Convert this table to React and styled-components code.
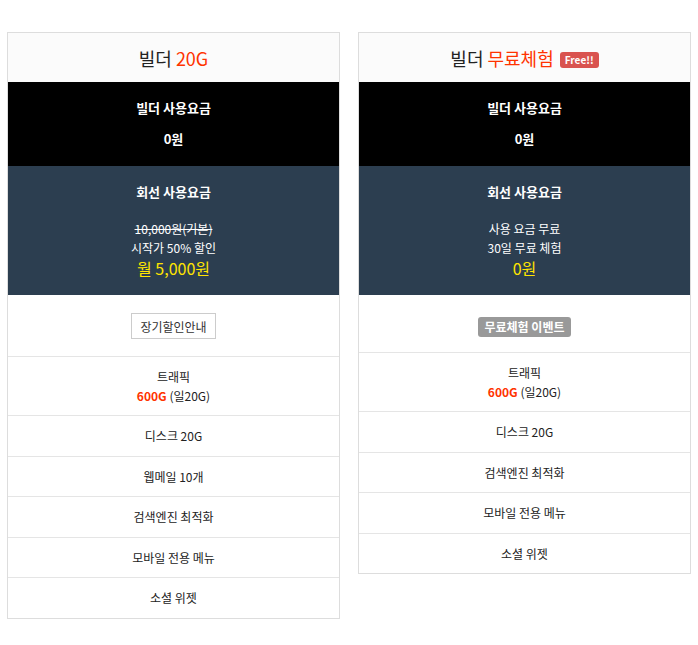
import React from 'react';
import styled, { createGlobalStyle } from 'styled-components';

const GlobalStyle = createGlobalStyle`
  body {
    margin: 0;
    background: #fff;
    font-family: "Noto Sans CJK KR", "Noto Sans", sans-serif;
    color: #222;
  }
`;

const Page = styled.div`
  display: grid;
  grid-template-columns: 1fr 1fr;
  gap: 18px;
  align-items: start;
  padding: 32px 7px 20px;
`;

const Card = styled.div`
  border: 1px solid #ddd;
  text-align: center;
`;

const Header = styled.div`
  height: 49px;
  display: flex;
  align-items: center;
  justify-content: center;
  gap: 6px;
  background: #fbfbfb;
  font-size: 18px;
  color: #222;
`;

const Red = styled.span`
  color: #ff3300;
  font-weight: ${({ bold }) => (bold ? 700 : 400)};
`;

const FreeBadge = styled.span`
  display: inline-block;
  margin-top: 4px;
  padding: 0 5px;
  height: 16px;
  line-height: 16px;
  border-radius: 3px;
  background: #d9534f;
  color: #fff;
  font-size: 10px;
  font-weight: 700;
`;

const PriceBlock = styled.div`
  background: ${({ bg }) => bg};
  color: #fff;
  padding: 16px 0 ${({ bottom }) => bottom}px;
`;

const BlockTitle = styled.div`
  font-size: 13px;
  font-weight: 700;
  line-height: 20px;
  margin-bottom: ${({ gap }) => gap}px;
`;

const BlockPrice = styled.div`
  font-size: ${({ big }) => (big ? 16 : 13)}px;
  font-weight: ${({ big }) => (big ? 400 : 700)};
  line-height: ${({ big }) => (big ? 22 : 20)}px;
  color: ${({ big }) => (big ? '#ffe400' : '#fff')};
`;

const SmallLine = styled.div`
  font-size: 12px;
  line-height: 19px;
  text-decoration: ${({ strike }) => (strike ? 'line-through' : 'none')};
`;

const ActionRow = styled.div`
  padding: ${({ top }) => top}px 0 ${({ bottom }) => bottom}px;
  display: flex;
  justify-content: center;
`;

const GuideButton = styled.button`
  height: 26px;
  padding: 0 8px;
  border: 1px solid #ccc;
  background: #fff;
  color: #333;
  font-family: inherit;
  font-size: 12px;
  cursor: pointer;
`;

const EventLabel = styled.span`
  display: inline-block;
  height: 20px;
  line-height: 20px;
  padding: 0 6px;
  border-radius: 3px;
  background: #999;
  color: #fff;
  font-size: 12px;
  font-weight: 700;
`;

const Feature = styled.div`
  border-top: 1px solid #e5e5e5;
  padding: 10px 0 ${({ multi }) => (multi ? 10 : 9.5)}px;
  font-size: 12px;
  line-height: ${({ multi }) => (multi ? 19 : 20)}px;
  color: #222;
`;

const Plan = ({ children }) => <Card>{children}</Card>;

const commonFeatures = ['검색엔진 최적화', '모바일 전용 메뉴', '소셜 위젯'];

const App = () => (
  <>
    <GlobalStyle />
    <Page>
      <Plan>
        <Header>
          <span>빌더 <Red>20G</Red></span>
        </Header>
        <PriceBlock bg="#000" bottom={17}>
          <BlockTitle gap={11}>빌더 사용요금</BlockTitle>
          <BlockPrice>0원</BlockPrice>
        </PriceBlock>
        <PriceBlock bg="#2c3e50" bottom={16}>
          <BlockTitle gap={17}>회선 사용요금</BlockTitle>
          <SmallLine strike>10,000원(기본)</SmallLine>
          <SmallLine>시작가 50% 할인</SmallLine>
          <BlockPrice big>월 5,000원</BlockPrice>
        </PriceBlock>
        <ActionRow top={18} bottom={17}>
          <GuideButton>장기할인안내</GuideButton>
        </ActionRow>
        <Feature multi>
          트래픽<br />
          <Red bold>600G</Red> (일20G)
        </Feature>
        <Feature>디스크 20G</Feature>
        <Feature>웹메일 10개</Feature>
        {commonFeatures.map((f) => (
          <Feature key={f}>{f}</Feature>
        ))}
      </Plan>

      <Plan>
        <Header>
          <span>빌더 <Red>무료체험</Red></span>
          <FreeBadge>Free!!</FreeBadge>
        </Header>
        <PriceBlock bg="#000" bottom={17}>
          <BlockTitle gap={11}>빌더 사용요금</BlockTitle>
          <BlockPrice>0원</BlockPrice>
        </PriceBlock>
        <PriceBlock bg="#2c3e50" bottom={16}>
          <BlockTitle gap={17}>회선 사용요금</BlockTitle>
          <SmallLine>사용 요금 무료</SmallLine>
          <SmallLine>30일 무료 체험</SmallLine>
          <BlockPrice big>0원</BlockPrice>
        </PriceBlock>
        <ActionRow top={22} bottom={15}>
          <EventLabel>무료체험 이벤트</EventLabel>
        </ActionRow>
        <Feature multi>
          트래픽<br />
          <Red bold>600G</Red> (일20G)
        </Feature>
        <Feature>디스크 20G</Feature>
        {commonFeatures.map((f) => (
          <Feature key={f}>{f}</Feature>
        ))}
      </Plan>
    </Page>
  </>
);

export default App;
